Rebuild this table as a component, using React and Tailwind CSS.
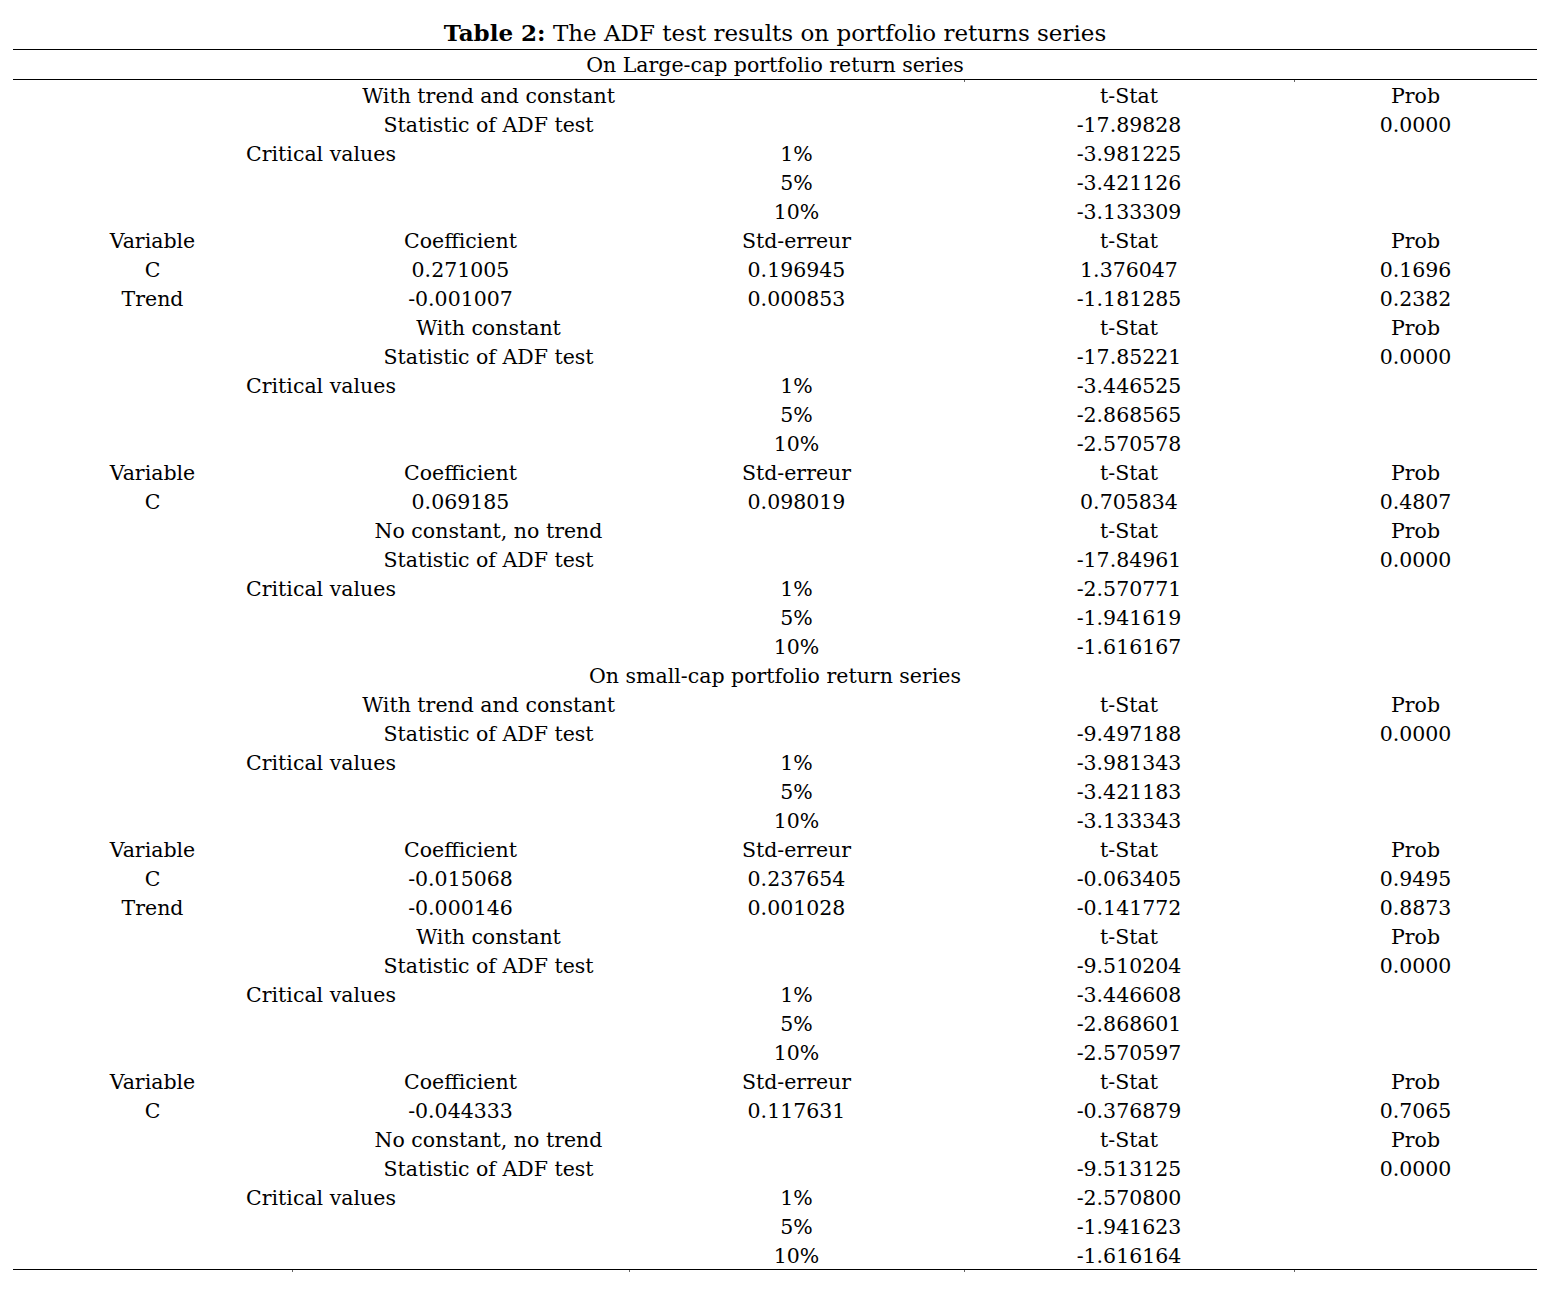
const cols = 'grid grid-cols-[279px_337px_335px_330px_243px]';

// each row: list of [text, span]
const blockTrend = (d) => [
  [['With trend and constant', 3], ['t-Stat', 1], ['Prob', 1]],
  [['Statistic of ADF test', 3], [d.adf, 1], ['0.0000', 1]],
  [['Critical values', 2], ['1%', 1], [d.cv[0], 1], ['', 1]],
  [['', 2], ['5%', 1], [d.cv[1], 1], ['', 1]],
  [['', 2], ['10%', 1], [d.cv[2], 1], ['', 1]],
  [['Variable', 1], ['Coefficient', 1], ['Std-erreur', 1], ['t-Stat', 1], ['Prob', 1]],
  ...d.vars.map((v) => v.map((t) => [t, 1])),
];

const blockConst = (d) => [
  [['With constant', 3], ['t-Stat', 1], ['Prob', 1]],
  [['Statistic of ADF test', 3], [d.adf, 1], ['0.0000', 1]],
  [['Critical values', 2], ['1%', 1], [d.cv[0], 1], ['', 1]],
  [['', 2], ['5%', 1], [d.cv[1], 1], ['', 1]],
  [['', 2], ['10%', 1], [d.cv[2], 1], ['', 1]],
  [['Variable', 1], ['Coefficient', 1], ['Std-erreur', 1], ['t-Stat', 1], ['Prob', 1]],
  ...d.vars.map((v) => v.map((t) => [t, 1])),
];

const blockNone = (d) => [
  [['No constant, no trend', 3], ['t-Stat', 1], ['Prob', 1]],
  [['Statistic of ADF test', 3], [d.adf, 1], ['0.0000', 1]],
  [['Critical values', 2], ['1%', 1], [d.cv[0], 1], ['', 1]],
  [['', 2], ['5%', 1], [d.cv[1], 1], ['', 1]],
  [['', 2], ['10%', 1], [d.cv[2], 1], ['', 1]],
];

const rows = [
  ...blockTrend({
    adf: '-17.89828',
    cv: ['-3.981225', '-3.421126', '-3.133309'],
    vars: [
      ['C', '0.271005', '0.196945', '1.376047', '0.1696'],
      ['Trend', '-0.001007', '0.000853', '-1.181285', '0.2382'],
    ],
  }),
  ...blockConst({
    adf: '-17.85221',
    cv: ['-3.446525', '-2.868565', '-2.570578'],
    vars: [['C', '0.069185', '0.098019', '0.705834', '0.4807']],
  }),
  ...blockNone({
    adf: '-17.84961',
    cv: ['-2.570771', '-1.941619', '-1.616167'],
  }),
  [['On small-cap portfolio return series', 5]],
  ...blockTrend({
    adf: '-9.497188',
    cv: ['-3.981343', '-3.421183', '-3.133343'],
    vars: [
      ['C', '-0.015068', '0.237654', '-0.063405', '0.9495'],
      ['Trend', '-0.000146', '0.001028', '-0.141772', '0.8873'],
    ],
  }),
  ...blockConst({
    adf: '-9.510204',
    cv: ['-3.446608', '-2.868601', '-2.570597'],
    vars: [['C', '-0.044333', '0.117631', '-0.376879', '0.7065']],
  }),
  ...blockNone({
    adf: '-9.513125',
    cv: ['-2.570800', '-1.941623', '-1.616164'],
  }),
];

const spanClass = {
  1: 'col-span-1',
  2: 'col-span-2',
  3: 'col-span-3',
  5: 'col-span-5',
};

// little cell-border stubs hanging under a rule
const Ticks = ({ all }) => (
  <div className={`${cols} h-[2px]`}>
    <div />
    <div className={all ? 'border-l border-black/60' : ''} />
    <div className={all ? 'border-l border-black/60' : ''} />
    <div className="border-l border-black/60" />
    <div className="border-l border-black/60" />
  </div>
);

export default function App() {
  return (
    <div className="min-h-screen bg-white text-black font-['DejaVu_Serif',serif] text-[20.5px]">
      <div className="pl-[13px] w-[1537px]">
        <div className="h-[49px] flex items-end justify-center pb-[1px] text-[23px] leading-[30px]">
          <span>
            <span className="font-bold">Table 2:</span> The ADF test results on portfolio returns series
          </span>
        </div>
        <div className="border-t border-black" />
        <div className="h-[29px] flex items-center justify-center leading-none pt-[2px]">
          On Large-cap portfolio return series
        </div>
        <div className="border-t border-black" />
        <div className="relative">
          <div className="absolute top-0 left-0 right-0">
            <Ticks />
          </div>
          {rows.map((r, i) => (
            <div key={i} className={`${cols} h-[29px]`}>
              {r.map(([t, s], j) => (
                <div key={j} className={`${spanClass[s]} flex items-center justify-center pt-[4px] leading-none whitespace-nowrap`}>
                  {t}
                </div>
              ))}
            </div>
          ))}
        </div>
        <div className="border-t border-black" />
        <Ticks all />
      </div>
    </div>
  );
}
